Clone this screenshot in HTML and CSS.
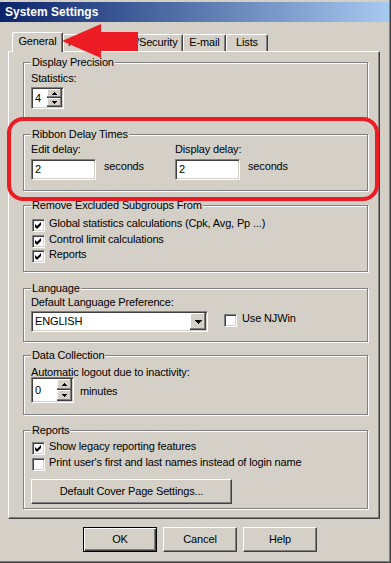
FILE: index.html
```html
<!DOCTYPE html>
<html lang="en">
<head>
<meta charset="utf-8">
<title>System Settings</title>
<link rel="stylesheet" href="styles.css">
</head>
<body>
<div class="window">
  <div class="titlebar">System Settings</div>

  <div class="tabs">
    <div class="tab active">General</div>
    <div class="tab t-sec">Administration/Security</div>
    <div class="tab t-mail">E-mail</div>
    <div class="tab t-lists">Lists</div>
  </div>

  <div class="panel">
    <fieldset class="group g-prec">
      <legend>Display Precision</legend>
      <div class="label">Statistics:</div>
      <div class="spin spin-sm">
        <span class="spin-val">4</span>
        <span class="spin-btns">
          <span class="sbtn"><svg width="5" height="3" viewBox="0 0 5 3"><path d="M2 0h1v1h1v1h1v1H0V2h1V1h1z"/></svg></span>
          <span class="sbtn"><svg width="5" height="3" viewBox="0 0 5 3"><path d="M0 0h5v1H4v1H3v1H2V2H1V1H0z"/></svg></span>
        </span>
      </div>
    </fieldset>

    <fieldset class="group g-ribbon">
      <legend>Ribbon Delay Times</legend>
      <div class="delay-grid">
        <div class="delay-col">
          <div class="label">Edit delay:</div>
          <div class="field-row"><div class="edit">2</div><span class="unit">seconds</span></div>
        </div>
        <div class="delay-col">
          <div class="label">Display delay:</div>
          <div class="field-row"><div class="edit">2</div><span class="unit">seconds</span></div>
        </div>
      </div>
    </fieldset>

    <fieldset class="group g-excl">
      <legend>Remove Excluded Subgroups From</legend>
      <div class="check"><span class="cb"><svg width="11" height="11" viewBox="0 0 11 11"><path d="M2 4L4 6L8 2L8 5L4 9L2 7Z"/></svg></span><span>Global statistics calculations (Cpk, Avg, Pp ...)</span></div>
      <div class="check"><span class="cb"><svg width="11" height="11" viewBox="0 0 11 11"><path d="M2 4L4 6L8 2L8 5L4 9L2 7Z"/></svg></span><span>Control limit calculations</span></div>
      <div class="check"><span class="cb"><svg width="11" height="11" viewBox="0 0 11 11"><path d="M2 4L4 6L8 2L8 5L4 9L2 7Z"/></svg></span><span>Reports</span></div>
    </fieldset>

    <fieldset class="group g-lang">
      <legend>Language</legend>
      <div class="label">Default Language Preference:</div>
      <div class="lang-row">
        <div class="combo">
          <span class="combo-val">ENGLISH</span>
          <span class="drop"><svg width="7" height="4" viewBox="0 0 7 4"><path d="M0 0h7v1H6v1H5v1H4v1H3V3H2V2H1V1H0z"/></svg></span>
        </div>
        <div class="check njwin"><span class="cb"></span><span>Use NJWin</span></div>
      </div>
    </fieldset>

    <fieldset class="group g-data">
      <legend>Data Collection</legend>
      <div class="label">Automatic logout due to inactivity:</div>
      <div class="spin-row">
        <div class="spin spin-lg">
          <span class="spin-val">0</span>
          <span class="spin-btns">
            <span class="sbtn"><svg width="5" height="3" viewBox="0 0 5 3"><path d="M2 0h1v1h1v1h1v1H0V2h1V1h1z"/></svg></span>
            <span class="sbtn"><svg width="5" height="3" viewBox="0 0 5 3"><path d="M0 0h5v1H4v1H3v1H2V2H1V1H0z"/></svg></span>
          </span>
        </div>
        <span class="unit-min">minutes</span>
      </div>
    </fieldset>

    <fieldset class="group g-rep">
      <legend>Reports</legend>
      <div class="check"><span class="cb"><svg width="11" height="11" viewBox="0 0 11 11"><path d="M2 4L4 6L8 2L8 5L4 9L2 7Z"/></svg></span><span>Show legacy reporting features</span></div>
      <div class="check"><span class="cb"></span><span>Print user's first and last names instead of login name</span></div>
      <div class="btn btn-wide">Default Cover Page Settings...</div>
    </fieldset>
  </div>

  <div class="buttons">
    <div class="btn btn-default">OK</div>
    <div class="btn">Cancel</div>
    <div class="btn">Help</div>
  </div>

  <svg class="annot" width="391" height="563" viewBox="0 0 391 563">
    <rect x="9" y="119" width="368" height="80" rx="14" ry="14" fill="none" stroke="#ed1c24" stroke-width="4"/>
    <polygon points="62,41 101,24 101,32 138,32 138,51 101,51 101,58" fill="#ed1c24"/>
  </svg>
</div>
</body>
</html>
```

FILE: styles.css
```css
* { box-sizing: border-box; }

body {
  margin: 0;
  background: #d4d0c8;
  font-family: "Liberation Sans", Arial, sans-serif;
  font-size: 11px;
  line-height: 13px;
  letter-spacing: -0.15px;
  color: #000;
}

.window {
  position: relative;
  width: 391px;
  height: 563px;
  padding-top: 2px;
  border-right: 1px solid #404040;
  border-bottom: 1px solid #404040;
  box-shadow: inset -1px -1px 0 #808080;
}

.titlebar {
  height: 20px;
  margin-right: 1px;
  padding-left: 5px;
  background: linear-gradient(to right, #0a246a, #a6caf0);
  color: #fff;
  font-weight: bold;
  font-size: 12px;
  line-height: 20px;
  letter-spacing: 0;
}

/* tabs */
.tabs {
  display: flex;
  align-items: flex-end;
  height: 19px;
  margin-top: 10px;
  padding-left: 12px;
  position: relative;
  z-index: 1;
}
.tab {
  height: 17px;
  padding-top: 1px;
  border-top: 1px solid #fff;
  border-left: 1px solid #fff;
  border-right: 1px solid #404040;
  box-shadow: inset -1px 0 0 #808080;
  border-radius: 2px 2px 0 0;
  text-align: center;
  white-space: nowrap;
  overflow: hidden;
  background: #d4d0c8;
}
.tab.active {
  width: 51px;
  height: 20px;
  padding-top: 2px;
  margin-bottom: -1px;
}
.t-sec { width: 120px; }
.t-mail { width: 43px; }
.t-lists { width: 42px; }

/* panel */
.panel {
  margin-left: 8px;
  width: 372px;
  height: 468px;
  border-top: 1px solid #fff;
  border-left: 1px solid #fff;
  border-right: 1px solid #404040;
  border-bottom: 1px solid #404040;
  box-shadow: inset -1px -1px 0 #808080;
  padding: 4px 11px 0 14px;
}

.group {
  margin: 0;
  padding: 0 7px;
  min-width: 0;
  border: 1px solid #808080;
  box-shadow: inset 1px 1px 0 #fff, 1px 1px 0 #fff;
}
.group legend {
  margin: 0;
  padding: 0 1px;
  line-height: 13px;
  background: #d4d0c8;
}

.g-prec   { padding-top: 3px; padding-bottom: 9px; }
.g-ribbon { margin-top: 9px; padding-top: 2px; padding-bottom: 10px; }
.g-excl   { margin-top: 8px; padding-top: 5px; padding-bottom: 7.5px; }
.g-lang   { margin-top: 10px; padding-top: 1px; padding-bottom: 9px; }
.g-data   { margin-top: 7px; padding-top: 4px; padding-bottom: 11px; }
.g-rep    { margin-top: 9px; padding-top: 3px; padding-bottom: 4px; }

.label { line-height: 13px; white-space: nowrap; }

/* sunken fields */
.spin, .edit, .combo, .cb {
  background: #fff;
  border: 1px solid;
  border-color: #808080 #fff #fff #808080;
  box-shadow: inset 1px 1px 0 #404040, inset -1px -1px 0 #d4d0c8;
}

.spin {
  display: flex;
  padding: 1px;
}
.spin-sm { width: 33px; height: 22px; margin-top: 2px; }
.spin-lg { width: 43px; height: 26px; margin-top: -2px; }
.spin-val {
  flex: 1;
  padding-left: 2px;
  display: flex;
  align-items: center;
}
.spin-btns {
  width: 15px;
  display: flex;
  flex-direction: column;
}
.sbtn {
  flex: 1;
  display: flex;
  align-items: center;
  justify-content: center;
  background: #d4d0c8;
  box-shadow: inset -1px -1px 0 #404040, inset -2px -2px 0 #808080, inset 1px 1px 0 #fff;
}
.sbtn svg, .drop svg { display: block; fill: #000; }

.spin-row { display: flex; align-items: center; }
.unit-min { margin-left: 6px; }

/* ribbon */
.delay-grid {
  display: grid;
  grid-template-columns: 144px 1fr;
}
.field-row {
  display: flex;
  align-items: flex-start;
  margin-top: 3px;
}
.edit {
  width: 65px;
  height: 21px;
  padding: 0 3px;
  line-height: 19px;
}
.unit { margin-left: 8px; padding-top: 1px; }

/* checkboxes */
.check {
  display: flex;
  align-items: flex-start;
  height: 15.5px;
  white-space: nowrap;
}
.cb {
  flex: none;
  width: 13px;
  height: 13px;
  margin: 2px 4px 0 1px;
}
.cb svg { display: block; fill: #000; }

/* language */
.lang-row {
  display: flex;
  align-items: flex-start;
  margin-top: 2px;
}
.combo {
  width: 177px;
  height: 21px;
  padding: 1px;
  display: flex;
}
.combo-val {
  flex: 1;
  padding-left: 2px;
  line-height: 17px;
}
.drop {
  width: 16px;
  display: flex;
  align-items: center;
  justify-content: center;
  background: #d4d0c8;
  box-shadow: inset -1px -1px 0 #404040, inset -2px -2px 0 #808080, inset 1px 1px 0 #fff;
}
.njwin { margin-left: 15px; margin-top: 1px; }
.njwin .cb { margin-right: 5px; }

/* buttons */
.btn {
  width: 74px;
  height: 25px;
  display: flex;
  align-items: center;
  justify-content: center;
  background: #d4d0c8;
  border: 1px solid;
  border-color: #fff #404040 #404040 #fff;
  box-shadow: inset -1px -1px 0 #808080;
}
.btn-default {
  border-color: #000;
  box-shadow: inset 1px 1px 0 #fff, inset -1px -1px 0 #404040, inset -2px -2px 0 #808080;
}
.btn-wide { width: 201px; margin-top: 8px; }

.buttons {
  display: flex;
  gap: 6px;
  margin-top: 8px;
  padding-left: 83px;
}

/* red annotations drawn over the dialog */
.annot {
  position: absolute;
  left: 0;
  top: 0;
  z-index: 2;
  pointer-events: none;
}
```
